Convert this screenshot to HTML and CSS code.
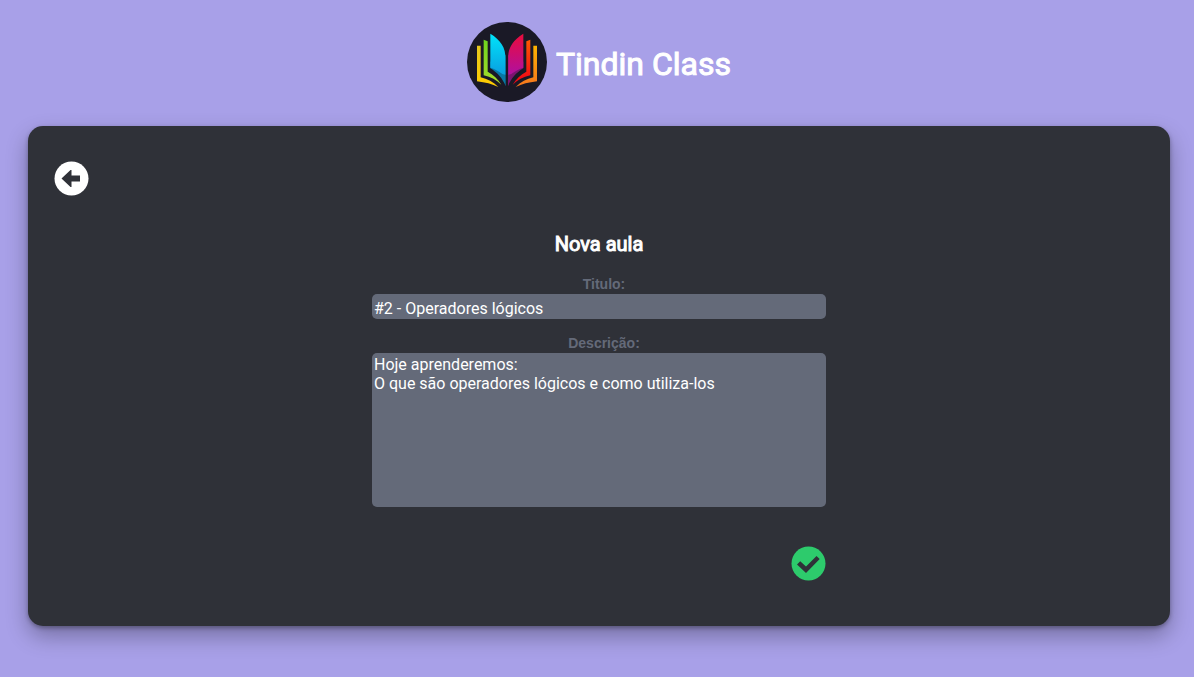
FILE: index.html
```
<!DOCTYPE html>
<html lang="pt-BR">
<head>
<meta charset="utf-8">
<meta name="viewport" content="width=device-width, initial-scale=1">
<title>Tindin Class</title>
<link rel="stylesheet" href="styles.css">
</head>
<body>
<header class="header">
  <svg class="logo" viewBox="21 21 240 240" role="img" aria-label="Tindin Class">
    <defs>
      <linearGradient id="yellow" x1="0" y1="0" x2="0" y2="1"><stop offset="0" stop-color="#e6c81e"/><stop offset="1" stop-color="#ffcc00"/></linearGradient>
      <linearGradient id="green" x1="0" y1="0" x2="0" y2="1"><stop offset="0" stop-color="#6fd41e"/><stop offset="1" stop-color="#a6dc2c"/></linearGradient>
      <linearGradient id="cyan" x1="0" y1="0" x2="0" y2="1"><stop offset="0" stop-color="#00e4fa"/><stop offset="1" stop-color="#0a9fe0"/></linearGradient>
      <linearGradient id="pink" x1="0" y1="0" x2="0" y2="1"><stop offset="0" stop-color="#ea0c3c"/><stop offset="1" stop-color="#b010a0"/></linearGradient>
      <linearGradient id="red" x1="0" y1="0" x2="0" y2="1"><stop offset="0" stop-color="#ff5a00"/><stop offset="1" stop-color="#f00018"/></linearGradient>
      <linearGradient id="orange" x1="0" y1="0" x2="0" y2="1"><stop offset="0" stop-color="#ffb400"/><stop offset="1" stop-color="#f5741e"/></linearGradient>
    </defs>
    <circle cx="141" cy="141" r="120" fill="#1a1926"/>
    <path fill="url(#yellow)" d="M51 92h11v95c20 5 38 14 53 29-19-9-39-14-64-17z"/>
    <path fill="url(#green)" d="M71 74l12 5v91c17 9 31 22 41 39-14-14-31-23-53-28z"/>
    <path fill="#0878a4" d="M91 140l46-20v94c-9-24-26-42-46-54z"/>
    <path fill="url(#cyan)" d="M91 56c30 18 47 43 45 73v50c-4 0-8-1-12-4-9-7-20-13-33-17z"/>
    <path fill="#7c1470" d="M144 120l46 20v20c-20 12-37 30-46 54z"/>
    <path fill="url(#pink)" d="M190 56c-30 18-47 43-45 73v50c4 0 8-1 12-4 9-7 20-13 33-17z"/>
    <path fill="url(#red)" d="M211 74l-12 5v91c-17 9-31 22-41 39 14-14 31-23 53-28z"/>
    <path fill="url(#orange)" d="M231 92h-11v95c-20 5-38 14-53 29 19-9 39-14 64-17z"/>
  </svg>
  <h1 class="brand">Tindin Class</h1>
</header>
<main class="card">
  <button class="icon-button" type="button" aria-label="Voltar">
    <svg class="icon" viewBox="0 0 35 35"><circle cx="17.5" cy="17.5" r="17" fill="#fff"/><path fill="#2f3138" d="M7.500 17.500L16.500 9h1v5.500H26v6h-8.500V26h-1z"/></svg>
  </button>
  <form class="form">
    <h2 class="form-title">Nova aula</h2>
    <label class="label" for="titulo">Titulo:</label>
    <input class="field" id="titulo" type="text" value="#2 - Operadores lógicos">
    <label class="label" for="descricao">Descrição:</label>
    <textarea class="field area" id="descricao">Hoje aprenderemos:
O que são operadores lógicos e como utiliza-los</textarea>
    <button class="icon-button save" type="submit" aria-label="Salvar">
      <svg class="icon" viewBox="0 0 35 35"><circle cx="17.500" cy="17.500" r="17" fill="#2dcb6c"/><path fill="#2f3138" d="M6 18.500l3.200-3.200 5.800 5.200L25.500 10l3.200 3L15 27z"/></svg>
    </button>
  </form>
</main>
</body>
</html>
```
FILE: styles.css
```
* { box-sizing: border-box; }
body {
  margin: 0;
  min-height: 100vh;
  background: #a8a0e8;
  color: #fff;
  font-family: Roboto, sans-serif;
}
.header {
  display: flex;
  align-items: center;
  justify-content: center;
  gap: 9px;
  padding: 22px 24px 24px 28px;
}
.logo { width: 80px; height: 80px; }
.brand {
  margin: 0;
  padding-top: 4px;
  font-size: 32px;
  line-height: 38px;
  font-weight: 400;
  -webkit-text-stroke: 1px #fff;
}
.card {
  margin: 0 24px 51px 28px;
  padding: 35px 26px 45px;
  border-radius: 15px;
  background: #2f3138;
  box-shadow: 0 2px 4px rgba(0, 0, 0, .3), 0 10px 22px rgba(0, 0, 0, .3);
}
.icon-button {
  display: block;
  padding: 0;
  border: 0;
  background: none;
  cursor: pointer;
}
.icon { display: block; width: 35px; height: 35px; }
.form {
  display: flex;
  flex-direction: column;
  max-width: 454px;
  margin: 36px auto 0;
}
.form-title {
  margin: 0 0 19px;
  font-size: 20px;
  line-height: 24px;
  font-weight: 400;
  text-align: center;
  -webkit-text-stroke: 1px #fff;
}
.label {
  padding-left: 10px;
  color: #646a79;
  font: bold 14px/18px "Liberation Sans", Arial, sans-serif;
  text-align: center;
}
.field {
  width: 100%;
  height: 25px;
  margin: 1px 0 15px;
  padding: 4px 2px 0;
  border: 0;
  border-radius: 5px;
  background: #646a79;
  color: #fff;
  font: 16px/19px Roboto, sans-serif;
}
.area { height: 154px; margin-bottom: 39px; padding: 2px; resize: none; }
.save { align-self: flex-end; }
```
